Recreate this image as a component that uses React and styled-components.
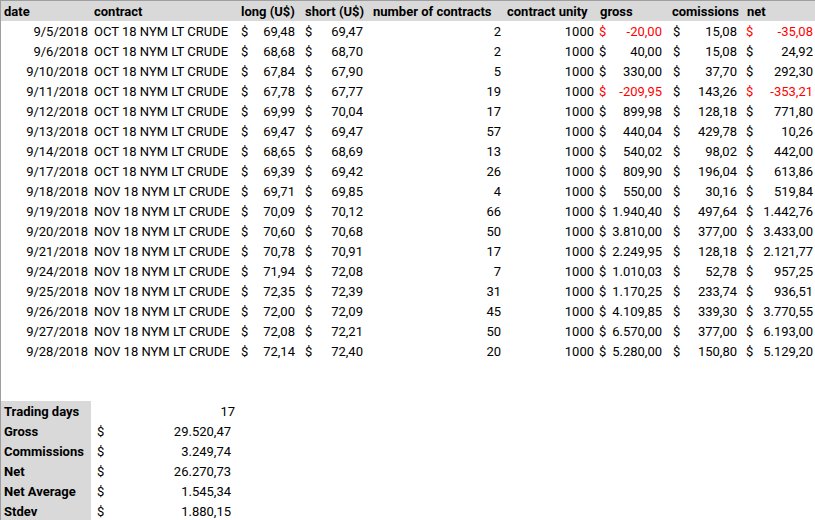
import React from 'react'
import styled, { createGlobalStyle } from 'styled-components'

const GlobalStyle = createGlobalStyle`
  html, body {
    margin: 0;
    padding: 0;
    background: #ffffff;
    overflow: hidden;
  }
  body {
    font-family: Roboto, "Liberation Sans", sans-serif;
    font-size: 13px;
    color: #000;
  }
`

const COLS = '90px 147px 64px 68px 134px 93px 72px 75px 76px'

const Sheet = styled.div`
  width: 820px;
  border-top: 1px solid #9e9e9e;
  border-left: 1px solid #9e9e9e;
`
const Row = styled.div`
  display: grid;
  grid-template-columns: ${COLS};
  height: 20px;
  background: ${p => (p.$head ? '#d9d9d9' : 'transparent')};
`
const Cell = styled.div`
  height: 20px;
  line-height: 22px;
  white-space: nowrap;
  overflow: hidden;
  text-align: ${p => p.$align || 'left'};
  padding: 0 ${p => (p.$align === 'right' ? '3px' : '0')} 0 ${p => (p.$align === 'right' ? '0' : '3px')};
  font-weight: ${p => (p.$bold ? 700 : 400)};
  background: ${p => (p.$shade ? '#d9d9d9' : 'transparent')};
`
const MoneyCell = styled.div`
  height: 20px;
  line-height: 22px;
  display: flex;
  justify-content: space-between;
  white-space: nowrap;
  overflow: hidden;
  padding: 0 7px 0 ${p => p.$pl}px;
  color: ${p => (p.$neg ? '#ff0000' : '#000')};
`
const Gap = styled.div`
  height: 40px;
`

const Money = ({ v, pl = 4 }) => (
  <MoneyCell $neg={v.startsWith('-')} $pl={pl}>
    <span>$</span>
    <span>{v}</span>
  </MoneyCell>
)

const head = ['date', 'contract', 'long (U$)', 'short (U$)', 'number of contracts', 'contract unity', 'gross', 'comissions', 'net']

const rows = [
  ['9/5/2018', 'OCT', '69,48', '69,47', 2, '-20,00', '15,08', '-35,08'],
  ['9/6/2018', 'OCT', '68,68', '68,70', 2, '40,00', '15,08', '24,92'],
  ['9/10/2018', 'OCT', '67,84', '67,90', 5, '330,00', '37,70', '292,30'],
  ['9/11/2018', 'OCT', '67,78', '67,77', 19, '-209,95', '143,26', '-353,21'],
  ['9/12/2018', 'OCT', '69,99', '70,04', 17, '899,98', '128,18', '771,80'],
  ['9/13/2018', 'OCT', '69,47', '69,47', 57, '440,04', '429,78', '10,26'],
  ['9/14/2018', 'OCT', '68,65', '68,69', 13, '540,02', '98,02', '442,00'],
  ['9/17/2018', 'OCT', '69,39', '69,42', 26, '809,90', '196,04', '613,86'],
  ['9/18/2018', 'NOV', '69,71', '69,85', 4, '550,00', '30,16', '519,84'],
  ['9/19/2018', 'NOV', '70,09', '70,12', 66, '1.940,40', '497,64', '1.442,76'],
  ['9/20/2018', 'NOV', '70,60', '70,68', 50, '3.810,00', '377,00', '3.433,00'],
  ['9/21/2018', 'NOV', '70,78', '70,91', 17, '2.249,95', '128,18', '2.121,77'],
  ['9/24/2018', 'NOV', '71,94', '72,08', 7, '1.010,03', '52,78', '957,25'],
  ['9/25/2018', 'NOV', '72,35', '72,39', 31, '1.170,25', '233,74', '936,51'],
  ['9/26/2018', 'NOV', '72,00', '72,09', 45, '4.109,85', '339,30', '3.770,55'],
  ['9/27/2018', 'NOV', '72,08', '72,21', 50, '6.570,00', '377,00', '6.193,00'],
  ['9/28/2018', 'NOV', '72,14', '72,40', 20, '5.280,00', '150,80', '5.129,20'],
]

const summary = [
  ['Gross', '29.520,47'],
  ['Commissions', '3.249,74'],
  ['Net', '26.270,73'],
  ['Net Average', '1.545,34'],
  ['Stdev', '1.880,15'],
]

export default function App() {
  return (
    <>
      <GlobalStyle />
      <Sheet>
        <Row $head>
          {head.map(h => (
            <Cell key={h} $bold>{h}</Cell>
          ))}
        </Row>
        {rows.map(r => (
          <Row key={r[0]}>
            <Cell $align='right'>{r[0]}</Cell>
            <Cell>{r[1]} 18 NYM LT CRUDE</Cell>
            <Money v={r[2]} pl={3} />
            <Money v={r[3]} pl={3} />
            <Cell $align='right'>{r[4]}</Cell>
            <Cell $align='right'>1000</Cell>
            <Money v={r[5]} pl={2} />
            <Money v={r[6]} pl={4} />
            <Money v={r[7]} pl={2} />
          </Row>
        ))}
        <Gap />
        <Row>
          <Cell $bold $shade>Trading days</Cell>
          <Cell $align='right'>17</Cell>
        </Row>
        {summary.map(s => (
          <Row key={s[0]}>
            <Cell $bold $shade>{s[0]}</Cell>
            <Money v={s[1]} pl={6} />
          </Row>
        ))}
      </Sheet>
    </>
  )
}
